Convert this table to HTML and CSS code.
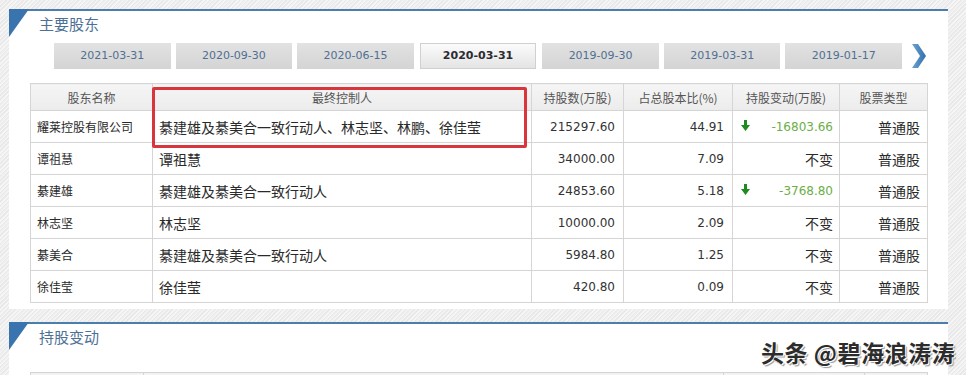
FILE: index.html
```html
<!DOCTYPE html>
<html lang="zh-CN">
<head>
<meta charset="utf-8">
<title>主要股东</title>
<link rel="stylesheet" href="styles.css">
</head>
<body>
<div class="page">
  <section class="panel panel-main">
    <h2 class="panel-title">主要股东</h2>
    <div class="tabs">
      <span class="tab">2021-03-31</span>
      <span class="tab">2020-09-30</span>
      <span class="tab">2020-06-15</span>
      <span class="tab active">2020-03-31</span>
      <span class="tab">2019-09-30</span>
      <span class="tab">2019-03-31</span>
      <span class="tab">2019-01-17</span>
      <span class="next"><svg width="16" height="26" viewBox="0 0 16 26"><defs><linearGradient id="g" x1="0" y1="0" x2="1" y2="0"><stop offset="0" stop-color="#6fa3d2"/><stop offset="1" stop-color="#2f6fab"/></linearGradient></defs><path d="M1 1 L7 1 L15 13 L7 25 L1 25 L9 13 Z" fill="url(#g)"/></svg></span>
    </div>
    <div class="table-wrap">
      <table class="grid">
        <colgroup>
          <col class="c1"><col class="c2"><col class="c3"><col class="c4"><col class="c5"><col class="c6">
        </colgroup>
        <thead>
          <tr><th>股东名称</th><th>最终控制人</th><th>持股数(万股)</th><th>占总股本比(%)</th><th>持股变动(万股)</th><th>股票类型</th></tr>
        </thead>
        <tbody>
          <tr><td class="name">耀莱控股有限公司</td><td class="ctrl">綦建雄及綦美合一致行动人、林志坚、林鹏、徐佳莹</td><td class="num">215297.60</td><td class="num">44.91</td><td class="chg"><div class="chg-in"><svg class="down" width="9" height="11" viewBox="0 0 9 11"><path d="M3 0 H6 V5 H9 L4.5 11 L0 5 H3 Z" fill="#1f8a1f"/></svg><span class="neg">-16803.66</span></div></td><td class="type">普通股</td></tr>
          <tr><td class="name">谭祖慧</td><td class="ctrl">谭祖慧</td><td class="num">34000.00</td><td class="num">7.09</td><td class="chg"><div class="chg-in"><span></span><span class="same">不变</span></div></td><td class="type">普通股</td></tr>
          <tr><td class="name">綦建雄</td><td class="ctrl">綦建雄及綦美合一致行动人</td><td class="num">24853.60</td><td class="num">5.18</td><td class="chg"><div class="chg-in"><svg class="down" width="9" height="11" viewBox="0 0 9 11"><path d="M3 0 H6 V5 H9 L4.5 11 L0 5 H3 Z" fill="#1f8a1f"/></svg><span class="neg">-3768.80</span></div></td><td class="type">普通股</td></tr>
          <tr><td class="name">林志坚</td><td class="ctrl">林志坚</td><td class="num">10000.00</td><td class="num">2.09</td><td class="chg"><div class="chg-in"><span></span><span class="same">不变</span></div></td><td class="type">普通股</td></tr>
          <tr><td class="name">綦美合</td><td class="ctrl">綦建雄及綦美合一致行动人</td><td class="num">5984.80</td><td class="num">1.25</td><td class="chg"><div class="chg-in"><span></span><span class="same">不变</span></div></td><td class="type">普通股</td></tr>
          <tr><td class="name">徐佳莹</td><td class="ctrl">徐佳莹</td><td class="num">420.80</td><td class="num">0.09</td><td class="chg"><div class="chg-in"><span></span><span class="same">不变</span></div></td><td class="type">普通股</td></tr>
        </tbody>
      </table>
      <div class="highlight"></div>
    </div>
  </section>
  <section class="panel panel-change">
    <h2 class="panel-title">持股变动</h2>
    <div class="watermark">头条 @碧海浪涛涛</div>
    <table class="grid grid2">
      <colgroup><col class="d1"><col class="d2"><col class="d3"><col class="d4"></colgroup>
      <thead><tr><th></th><th></th><th></th><th></th></tr></thead>
    </table>
  </section>
</div>
</body>
</html>
```

FILE: styles.css
```css
html, body {
  margin: 0;
  padding: 0;
}
body {
  width: 966px;
  height: 375px;
  overflow: hidden;
  background-color: #eeeeee;
  background-image: repeating-linear-gradient(135deg, #f6f6f6 0 1px, #e8e8e8 1px 2px, #efefef 2px 3px);
  font-family: "Noto Sans CJK SC", "DejaVu Sans", sans-serif;
  color: #333;
}
.page {
  padding: 9px 18px 0 9px;
}
.panel {
  position: relative;
  background: #fff;
  border-top: 2px solid #4b7eac;
  padding: 0 21px;
}
.panel::before {
  content: "";
  position: absolute;
  left: 0;
  top: -2px;
  width: 0;
  height: 0;
  border-top: 28px solid #3a74ae;
  border-right: 20px solid transparent;
}
.panel-main {
  padding-bottom: 6px;
}
.panel-change {
  margin-top: 13px;
}
.panel-title {
  margin: 0;
  height: 26px;
  line-height: 26px;
  padding-left: 9px;
  font-size: 15px;
  font-weight: normal;
  color: #4d7196;
}
.tabs {
  display: flex;
  align-items: center;
  gap: 5px;
  margin: 6px 0 0 24px;
  height: 26px;
}
.tab {
  width: 117px;
  height: 26px;
  box-sizing: border-box;
  line-height: 26px;
  text-align: center;
  background: linear-gradient(#e2e2e2, #d4d4d4);
  color: #4f6f93;
  font-family: "DejaVu Sans", sans-serif;
  font-size: 11px;
}
.tab.active {
  background: linear-gradient(#fbfbfb, #e4e4e4);
  border: 1px solid #d0d0d0;
  line-height: 24px;
  color: #2b2b33;
  font-weight: bold;
  margin: 0 1px;
}
.next {
  display: flex;
  margin-left: 4px;
  height: 26px;
}
.table-wrap {
  position: relative;
  margin-top: 14px;
}
.grid {
  border-collapse: collapse;
  table-layout: fixed;
  width: 897px;
  font-size: 12px;
}
.grid col.c1 { width: 122px; }
.grid col.c2 { width: 379px; }
.grid col.c3 { width: 92px; }
.grid col.c4 { width: 109px; }
.grid col.c5 { width: 107px; }
.grid col.c6 { width: 88px; }
.grid th, .grid td {
  border: 1px solid #d5d5d5;
  padding: 0 6px;
  white-space: nowrap;
  overflow: hidden;
}
.grid th {
  height: 26px;
  background: linear-gradient(#f5f5f5, #ececec);
  font-weight: normal;
  color: #555;
  text-align: center;
}
.grid td {
  height: 31px;
  color: #2a2a2a;
}
.grid td.name { font-size: 12px; }
.grid td.ctrl { font-size: 14px; }
.grid td.num {
  text-align: right;
  font-family: "DejaVu Sans", sans-serif;
  font-size: 12px;
  padding-right: 8px;
  color: #333;
}
.grid td.chg {
  font-family: "DejaVu Sans", sans-serif;
  font-size: 12px;
  padding: 0 6px 0 8px;
}
.chg-in {
  display: flex;
  align-items: center;
  justify-content: space-between;
}
.down {
  display: block;
  margin-top: -2px;
}
.neg { color: #6cae48; }
.same {
  font-family: "Noto Sans CJK SC", sans-serif;
  font-size: 14px;
  color: #2a2a2a;
}
.grid td.type {
  text-align: right;
  font-size: 14px;
  padding-right: 7px;
}
.highlight {
  position: absolute;
  left: 122px;
  top: 4px;
  width: 375px;
  height: 61px;
  box-sizing: border-box;
  border: 3px solid #d8363c;
  border-radius: 2px;
  pointer-events: none;
}
.grid2 {
  margin-top: 22px;
}
.grid col.d1 { width: 113px; }
.grid col.d2 { width: 580px; }
.grid col.d3 { width: 141px; }
.grid col.d4 { width: 63px; }
.watermark {
  position: absolute;
  right: -7px;
  top: 11px;
  font-size: 23px;
  font-weight: bold;
  letter-spacing: 0.5px;
  color: #2c2c2c;
  text-shadow: 1px 1px 0 #fff, -1px -1px 0 #fff, 2px 2px 1px #999;
  z-index: 1;
}
```
